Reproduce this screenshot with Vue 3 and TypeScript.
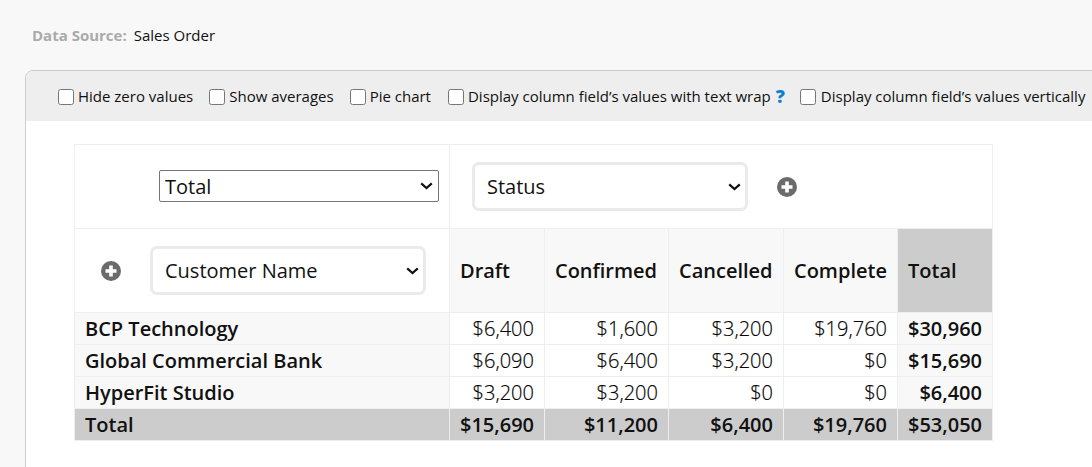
<script setup lang="ts">
interface Row { name: string; cells: string[]; total: string }
const columns: string[] = ['Draft', 'Confirmed', 'Cancelled', 'Complete']
const rows: Row[] = [
  { name: 'BCP Technology', cells: ['$6,400', '$1,600', '$3,200', '$19,760'], total: '$30,960' },
  { name: 'Global Commercial Bank', cells: ['$6,090', '$6,400', '$3,200', '$0'], total: '$15,690' },
  { name: 'HyperFit Studio', cells: ['$3,200', '$3,200', '$0', '$0'], total: '$6,400' },
]
const footer: string[] = ['$15,690', '$11,200', '$6,400', '$19,760', '$53,050']
const widths: number[] = [95, 124, 115, 114, 95]
</script>

<template>
  <div class="page">
    <div class="source"><b>Data Source:</b><span>Sales Order</span></div>
    <section class="card">
      <div class="toolbar">
        <label class="opt"><input type="checkbox" />Hide zero values</label>
        <label class="opt"><input type="checkbox" />Show averages</label>
        <label class="opt"><input type="checkbox" />Pie chart</label>
        <label class="opt"><input type="checkbox" />Display column field’s values with text wrap <b class="help">?</b></label>
        <label class="opt"><input type="checkbox" />Display column field’s values vertically</label>
      </div>
      <div class="body">
        <table class="pivot">
          <colgroup>
            <col class="first" />
            <col v-for="(w, i) in widths" :key="i" :style="{ width: w + 'px' }" />
          </colgroup>
          <tbody>
            <tr class="head1">
              <td class="total-pick">
                <select class="plain"><option>Total</option></select>
              </td>
              <td colspan="5" class="status-pick">
                <div class="pick-row">
                  <select class="fancy"><option>Status</option></select>
                  <svg class="plus plus-col" viewBox="0 0 20 20" aria-hidden="true">
                    <circle cx="10" cy="10" r="10" fill="#6b6b6b" />
                    <path d="M10 4.5v11M4.5 10h11" stroke="#fff" stroke-width="3.6" />
                  </svg>
                </div>
              </td>
            </tr>
            <tr class="head2">
              <td class="row-pick">
                <div class="pick-row">
                  <svg class="plus" viewBox="0 0 20 20" aria-hidden="true">
                    <circle cx="10" cy="10" r="10" fill="#6b6b6b" />
                    <path d="M10 4.5v11M4.5 10h11" stroke="#fff" stroke-width="3.6" />
                  </svg>
                  <select class="fancy"><option>Customer Name</option></select>
                </div>
              </td>
              <th v-for="c in columns" :key="c" class="col">{{ c }}</th>
              <th class="col grand">Total</th>
            </tr>
            <tr v-for="r in rows" :key="r.name" class="data">
              <th class="name">{{ r.name }}</th>
              <td v-for="(c, i) in r.cells" :key="i" class="num">{{ c }}</td>
              <td class="num sum">{{ r.total }}</td>
            </tr>
            <tr class="foot">
              <th class="name">Total</th>
              <td v-for="(f, i) in footer" :key="i" class="num">{{ f }}</td>
            </tr>
          </tbody>
        </table>
      </div>
    </section>
  </div>
</template>

<style>
html, body { margin: 0; background: #f8f8f8; overflow: hidden; }
</style>

<style scoped>
.page {
  width: 1092px;
  height: 467px;
  overflow: hidden;
  box-sizing: border-box;
  padding: 25px 0 0 25px;
  font-family: "Open Sans", sans-serif;
  color: #111;
  background: #f8f8f8;
}
.source {
  display: flex;
  gap: 7px;
  height: 20px;
  margin: 0 0 25px 7px;
  font-size: 15px;
  line-height: 20px;
}
.source b { color: #aaa; font-weight: 700; }
.card {
  width: 1100px;
  height: 420px;
  border: 1px solid #ccc;
  border-radius: 8px 0 0 0;
  background: #fff;
  overflow: hidden;
}
.toolbar {
  display: flex;
  align-items: center;
  gap: 16px;
  height: 50px;
  padding-left: 32px;
  background: #eee;
  font-size: 15px;
  white-space: nowrap;
}
.opt { display: flex; align-items: center; }
.opt:nth-child(4) { margin-left: 1px; }
.opt input {
  width: 16px;
  height: 16px;
  margin: 1px 4px 0 0;
}
.opt:nth-child(5) input { margin-right: 5px; }
.help { color: #0d83c9; font-size: 18px; line-height: 18px; margin-left: 5px; margin-right: -1px; font-weight: 800; }
.body { padding: 23px 0 0 48px; }
.pivot {
  width: 919px;
  table-layout: fixed;
  border-collapse: collapse;
  background: #fff;
}
.pivot td, .pivot th {
  border: 1px solid #eee;
  padding: 0 10px;
  font-size: 20px;
  line-height: 31px;
  box-sizing: border-box;
}
.head1 td, .head2 td, .head2 th { height: 84px; }
.total-pick { text-align: right; }
.plain, .fancy {
  appearance: none;
  background-color: #fff;
  background-image: url("data:image/svg+xml,%3Csvg xmlns='http://www.w3.org/2000/svg' width='13' height='8' viewBox='0 0 13 8'%3E%3Cpath d='M1.2 1.4 6.5 6 11.8 1.4' fill='none' stroke='%23111' stroke-width='2.2'/%3E%3C/svg%3E");
  background-repeat: no-repeat;
  font: 20px "Open Sans", sans-serif;
  color: #111;
}
.plain {
  width: 280px;
  height: 32px;
  padding: 2px 0 0 5px;
  line-height: 28px;
  background-position: right 5px center;
  border: 1px solid #767676;
  border-radius: 2px;
  vertical-align: top;
}
.total-pick .plain { margin-top: -1px; }
.pick-row { display: flex; align-items: center; }
.status-pick .pick-row { padding-left: 12px; gap: 29px; }
.row-pick .pick-row { padding-left: 16px; gap: 29px; }
.fancy {
  width: 276px;
  height: 49px;
  box-sizing: border-box;
  padding: 0 0 0 12px;
  background-position: right 4px center;
  border: 3px solid #eaeaea;
  border-radius: 7px;
  outline: none;
}
.plus { width: 20px; height: 20px; flex: none; }
.col { background: #f8f8f8; font-weight: 600; text-align: left; }
.grand { background: #ccc; }
.name { background: #f8f8f8; font-weight: 600; text-align: left; }
.num { text-align: right; font-weight: 300; color: #000; -webkit-text-stroke: 0.2px #111; }
.sum { background: #f8f8f8; font-weight: 600; color: #111; -webkit-text-stroke: 0; }
.data td, .data th, .foot td, .foot th { height: 32px; }
.foot td, .foot th { background: #ccc; font-weight: 600; border-color: #eee; -webkit-text-stroke: 0; color: #111; }
</style>
